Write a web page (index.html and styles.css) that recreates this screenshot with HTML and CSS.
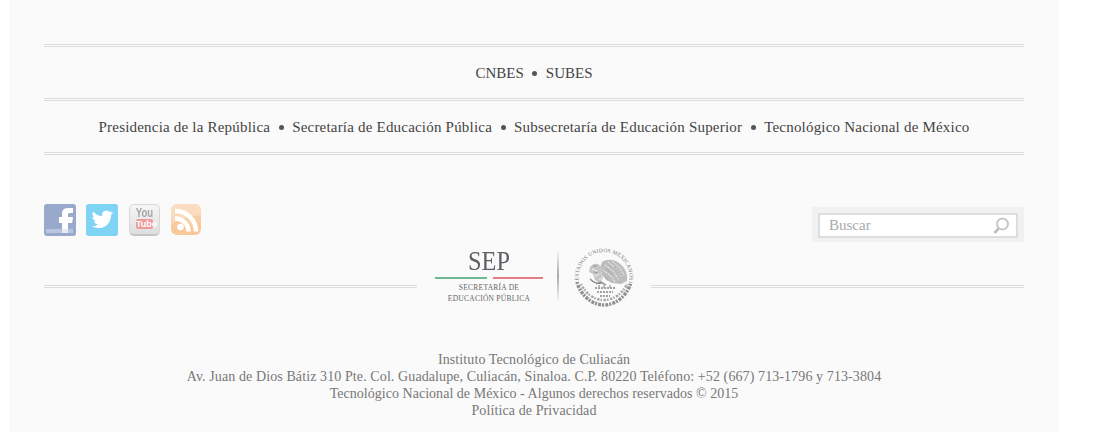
FILE: index.html
```html
<!DOCTYPE html>
<html lang="es">
<head>
    <meta charset="UTF-8">
    <meta name="viewport" content="width=device-width, initial-scale=1.0">
    <title>Instituto Tecnológico de Culiacán</title>
    <link rel="stylesheet" href="styles.css">
</head>
<body>
    <footer class="footer">
        <!-- Link rows -->
        <nav class="link-row link-row-short">
            <a href="#">CNBES</a>
            <span class="dot"></span>
            <a href="#">SUBES</a>
        </nav>
        <nav class="link-row">
            <a href="#">Presidencia de la República</a>
            <span class="dot"></span>
            <a href="#">Secretaría de Educación Pública</a>
            <span class="dot"></span>
            <a href="#">Subsecretaría de Educación Superior</a>
            <span class="dot"></span>
            <a href="#">Tecnológico Nacional de México</a>
        </nav>

        <!-- Social icons and search -->
        <div class="tools">
            <div class="social">
                <a href="#" class="icon icon-fb" aria-label="Facebook">
                    <svg viewBox="0 0 32 32" width="32" height="32">
                        <rect x="2" y="25" width="27" height="4" fill="#b9c5dd"/>
                        <path d="M18 29V19h-3v-6h3v-3c0-4 2-6 6-6h5v5h-3c-1.500 0-2 .6-2 2v2h5l-.8 6H24v10z" fill="#fff"/>
                        <rect x="18" y="25" width="6" height="4" fill="#e6eaf2"/>
                    </svg>
                </a>
                <a href="#" class="icon icon-tw" aria-label="Twitter">
                    <svg viewBox="0 0 32 32" width="32" height="32">
                        <path d="M27 8.600c-.8.4-1.600.6-2.500.7.900-.6 1.600-1.400 1.900-2.400-.8.500-1.800.9-2.800 1.100a4.400 4.400 0 0 0-7.500 4C12.500 11.800 9.300 10 7.100 7.400c-1.100 2-.6 4.500 1.400 5.900-.7 0-1.400-.2-2-.5 0 2.100 1.500 3.900 3.500 4.300-.6.200-1.300.2-2 .1.600 1.700 2.200 3 4.100 3-1.800 1.500-4.200 2.200-6.500 1.900 2 1.300 4.300 2 6.800 2 8.300 0 12.900-7 12.600-13.200.9-.7 1.700-1.500 2.300-2.300z" fill="#fff"/>
                    </svg>
                </a>
                <a href="#" class="icon icon-yt" aria-label="YouTube">
                    <span class="yt-you">You</span>
                    <span class="yt-tube">Tube</span>
                </a>
                <a href="#" class="icon icon-rss" aria-label="RSS">
                    <svg viewBox="0 0 30 31" width="30" height="31">
                        <path d="M0 0h30v11c-9 1-20 3-30 9z" fill="#fff" opacity="0.25"/>
                        <circle cx="9.500" cy="23" r="3.300" fill="#fff"/>
                        <path d="M4 14.500a13 13 0 0 1 13.500 13M4 7a20.500 20.500 0 0 1 21 20.500" fill="none" stroke="#fff" stroke-width="4.500"/>
                    </svg>
                </a>
            </div>
            <form class="search">
                <input type="text" placeholder="Buscar">
                <svg class="search-icon" viewBox="0 0 18 18" width="18" height="18">
                    <circle cx="9.500" cy="7" r="5.500" fill="none" stroke="#c6c6c6" stroke-width="2"/>
                    <path d="M5.500 11.500L1.500 16" stroke="#c0c0c0" stroke-width="2.800" fill="none"/>
                </svg>
            </form>
        </div>

        <!-- SEP logo between two rules -->
        <div class="logo-row">
            <div class="rule"></div>
            <div class="logo">
                <div class="sep">
                    <div class="sep-name">SEP</div>
                    <div class="sep-bar"><span class="green"></span><span class="red"></span></div>
                    <div class="sep-text">SECRETARÍA DE<br>EDUCACIÓN PÚBLICA</div>
                </div>
                <div class="divider"></div>
                <svg class="seal" viewBox="0 0 64 64" width="64" height="64">
                    <defs>
                        <path id="seal-arc" d="M6.900 37A25.500 25.500 0 1 1 57.100 37"/>
                        <filter id="soft"><feGaussianBlur stdDeviation="0.4"/></filter>
                    </defs>
                    <text class="seal-text"><textPath href="#seal-arc" startOffset="50%" text-anchor="middle">ESTADOS UNIDOS MEXICANOS</textPath></text>
                    <g filter="url(#soft)">
                        <!-- eagle -->
                        <path d="M30 17c5-3 12-3 17 1 6 4 9 11 8 18l-6 3-9-1-6-3-4-6-2-6z" fill="#bdbdbd"/>
                        <path d="M18 22c2-3 6-4 8-3l4 3-1 5 2 6-3 5-5-3-2-6-4-2z" fill="#c6c6c6"/>
                        <path d="M33 20l8 6 6 9M36 17l9 7 5 8M31 25l8 6 4 6M40 16l8 7 4 7" fill="none" stroke="#f4f4f4" stroke-width="1" stroke-dasharray="2 1"/>
                        <path d="M34 24l7 6M30 29l7 6M43 22l6 8" fill="none" stroke="#8e8e8e" stroke-width="0.800" stroke-dasharray="1.500 1.500"/>
                        <path d="M20 24l5 2M23 31l4-2M27 35l3-2" fill="none" stroke="#f4f4f4" stroke-width="1"/>
                        <path d="M21 21l4 0M22 27l4 1" fill="none" stroke="#888" stroke-width="0.800"/>
                        <path d="M18 34c4 4 9 5 13 4M24 39l5-2 5 3" fill="none" stroke="#8c8c8c" stroke-width="1.200"/>
                        <!-- cactus and lake -->
                        <path d="M23 43h20M25 47h16M28 51h10" stroke="#a0a0a0" stroke-width="1.800" stroke-dasharray="2 1"/>
                        <path d="M32 38v5M27 40v3M38 40v3" stroke="#aaa" stroke-width="1.500"/>
                        <!-- wreath -->
                        <path d="M5 37c3 12 14 23 27 23s24-11 27-23" fill="none" stroke="#8f8f8f" stroke-width="3.500" stroke-dasharray="2 1.200 3 1"/>
                        <path d="M9 39c4 9 13 16 23 16s19-7 23-16" fill="none" stroke="#a8a8a8" stroke-width="2.500" stroke-dasharray="1.500 1.500 2.500 1"/>
                    </g>
                </svg>
            </div>
            <div class="rule"></div>
        </div>

        <!-- Address -->
        <div class="address">
            <p>Instituto Tecnológico de Culiacán</p>
            <p>Av. Juan de Dios Bátiz 310 Pte. Col. Guadalupe, Culiacán, Sinaloa. C.P. 80220 Teléfono: +52 (667) 713-1796 y 713-3804</p>
            <p class="copy">Tecnológico Nacional de México - Algunos derechos reservados © 2015</p>
            <p><a href="#">Política de Privacidad</a></p>
        </div>
    </footer>
</body>
</html>
```

FILE: styles.css
```css
* {
    margin: 0;
    padding: 0;
    box-sizing: border-box;
}

html, body {
    height: 100%;
    overflow: hidden;
}

body {
    font-family: "Liberation Serif", "Times New Roman", serif;
    background: #fff;
    color: #444;
}

a {
    color: inherit;
    text-decoration: none;
}

.footer {
    width: 1050px;
    height: 100%;
    margin-left: 9px;
    padding: 44px 35px 0;
    background: #fafafa;
}

.link-row {
    display: flex;
    justify-content: center;
    align-items: center;
    gap: 8px;
    height: 57px;
    padding-top: 2px;
    font-size: 15px;
    letter-spacing: 0.2px;
    border-top: 3px double #ddd;
    border-bottom: 3px double #ddd;
}

.link-row-short {
    height: 54px;
    letter-spacing: 0;
    border-bottom: none;
}

.dot {
    width: 5px;
    height: 5px;
    margin: 0 0.5px;
    border-radius: 50%;
    background: #555;
}

.tools {
    display: flex;
    justify-content: space-between;
    align-items: flex-start;
    margin-top: 49px;
}

.social {
    display: flex;
    gap: 10px;
}

.icon {
    display: block;
    width: 32px;
    height: 32px;
    border-radius: 3px;
    overflow: hidden;
}

.icon svg {
    display: block;
}

.icon-fb {
    background: #98a9cb;
}

.icon-tw {
    background: #7fd3f5;
}

.icon-yt {
    width: 31px;
    margin-left: 1px;
    text-align: center;
    font-family: "Liberation Sans", Arial, sans-serif;
    font-weight: bold;
    background: linear-gradient(#f6f6f6, #dedede);
    border: 1px solid #d8d8d8;
    border-bottom: 2px solid #c4c4c4;
    border-radius: 5px;
}

.yt-you {
    display: block;
    margin-top: 3px;
    font-size: 12px;
    line-height: 11px;
    color: #a5a5a5;
    transform: scaleX(0.8);
}

.yt-tube {
    display: block;
    width: 17px;
    height: 10px;
    margin: 0 auto;
    font-size: 9px;
    line-height: 10px;
    color: #fff;
    background: #ef9a9a;
    border-radius: 2px;
}

.icon-rss {
    width: 30px;
    height: 31px;
    margin-left: 1px;
    background: linear-gradient(#f9d3ae, #f8c799);
    border-radius: 6px;
}

.search {
    position: relative;
    width: 212px;
    height: 35px;
    margin-top: 3px;
    padding: 6px;
    background: #f1f1f1;
}

.search input {
    display: block;
    width: 200px;
    height: 25px;
    padding: 0 9px;
    font-family: inherit;
    font-size: 15px;
    background: #fff;
    border: 2px solid #ddd;
    outline: none;
}

.search input::placeholder {
    color: #aaa;
    opacity: 1;
}

.search-icon {
    position: absolute;
    top: 10px;
    right: 13px;
}

.logo-row {
    display: flex;
    align-items: center;
    height: 56px;
    margin-top: 6px;
}

.rule {
    flex: 1;
    margin-top: 20px;
    border-top: 3px double #ddd;
}

.logo {
    display: flex;
    align-items: center;
    width: 234px;
    height: 56px;
    padding-left: 18px;
}

.sep {
    width: 108px;
    text-align: center;
    color: #666;
}

.sep-name {
    font-size: 27px;
    line-height: 25px;
    color: #5d6065;
    transform: scaleX(0.9);
}

.sep-bar {
    display: flex;
    justify-content: space-between;
    height: 2px;
    margin: 3px 0;
}

.sep-bar span {
    display: block;
    height: 2px;
}

.green {
    width: 52px;
    background: #6db895;
}

.red {
    width: 50px;
    background: #e27c88;
}

.sep-text {
    font-size: 7.500px;
    line-height: 11px;
    letter-spacing: 0.25px;
}

.divider {
    width: 2px;
    height: 54px;
    margin: 0 14px;
    background: linear-gradient(to bottom, #fafafa, #aaa 50%, #fafafa);
}

.seal {
    display: block;
    margin: 2px 0 0 -1px;
}

.seal-text {
    font-size: 5.500px;
    letter-spacing: 0.2px;
    fill: #777;
}

.address {
    margin-top: 47px;
    font-size: 14px;
    line-height: 17px;
    letter-spacing: 0.1px;
    text-align: center;
    color: #777;
}

.copy {
    letter-spacing: 0.03px;
}
```
